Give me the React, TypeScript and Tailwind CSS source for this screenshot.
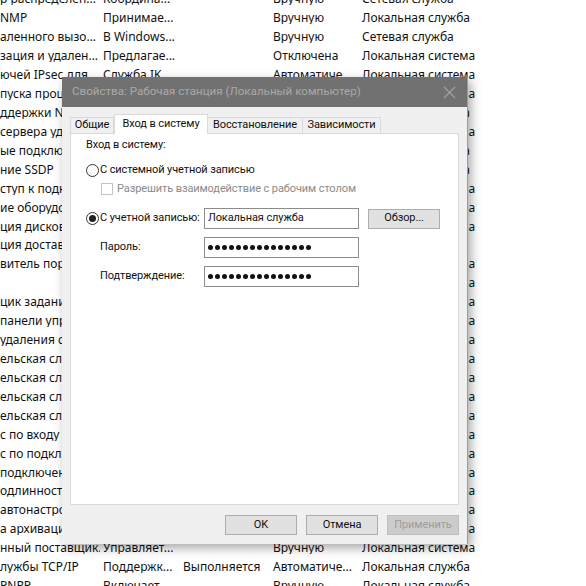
import React from "react";

type Row = [string, string, string, string, string];

const SYS = "Локальная система";
const SRV = "Локальная служба";

const rows: Row[] = [
  ["р распределен...", "Координа...", "", "Вручную", "Сетевая служба"],
  ["NMP", "Принимае...", "", "Вручную", SRV],
  ["аленного вызо...", "В Windows...", "", "Вручную", "Сетевая служба"],
  ["зация и удален...", "Предлагае...", "", "Отключена", SYS],
  ["ючей IPsec для...", "Служба IK...", "", "Автоматиче...", SYS],
  ["пуска процессов...", "Служба DCOM...", "Выполняется", "Автоматиче...", SYS],
  ["ддержки NetBIOS...", "Поддержк...", "", "Вручную", SRV],
  ["сервера удаленных...", "Позволяет...", "", "Вручную", SYS],
  ["ые подключения", "Служба...", "", "Вручную", SRV],
  ["ние SSDP", "Обнаруж...", "", "Вручную", SRV],
  ["ступ к подключению", "Обеспечи...", "", "Отключена", SYS],
  ["ие оборудования", "Обеспечи...", "", "Вручную", SYS],
  ["ция дисков", "Выполняет...", "", "Вручную", SYS],
  ["ция доставки", "Оптимиза...", "", "Вручную", "Сетевая служба"],
  ["витель портов", "Позволяет...", "", "Вручную", SYS],
  ["", "", "", "Вручную", SYS],
  ["цик заданий", "Позволяет...", "Выполняется", "Автоматиче...", SYS],
  [" панели управления", "Эта служб...", "", "Вручную", SYS],
  ["удаления смарт-карт", "Позволяет...", "", "Вручную", SYS],
  ["ельская служба", "Служба...", "", "Вручную", SYS],
  ["ельская служба", "Служба...", "", "Вручную", SYS],
  ["ельская служба", "Служба...", "", "Вручную", SYS],
  ["ельская служба", "Служба...", "", "Вручную", SYS],
  ["с по входу в систему", "Позволяет...", "", "Вручную", SYS],
  ["с по подключению", "Управляет...", "", "Вручную", SYS],
  [" подключения", "Управляет...", "", "Вручную", SYS],
  ["одлинности", "Служба...", "", "Вручную", SYS],
  [" автонастройки", "Служба...", "", "Вручную", SYS],
  ["а архивации", "Служба...", "", "Вручную", SYS],
  ["нный поставщик...", "Управляет...", "", "Вручную", SYS],
  ["лужбы TCP/IP", "Поддержк...", "Выполняется", "Автоматиче...", SRV],
  ["PNRP", "Включает...", "", "Вручную", SRV],
];

const bgFont = { fontFamily: '"Noto Sans", "Open Sans", sans-serif' };
const dlgFont = { fontFamily: 'Roboto, "Noto Sans", sans-serif' };

function Dots() {
  return (
    <span className="flex gap-[1.6px] items-center">
      {Array.from({ length: 15 }).map((_, i) => (
        <span key={i} className="block w-[5.4px] h-[5.4px] rounded-full bg-[#111]" />
      ))}
    </span>
  );
}

export default function App() {
  return (
    <div className="relative w-[586px] h-[586px] overflow-hidden bg-white text-[#111]" style={bgFont}>
      {/* background services list */}
      <div className="-mt-[10px] flex flex-col text-[12px]">
        {rows.map((r, i) => (
          <div key={i} className="flex h-[18.93px] items-center whitespace-nowrap leading-none">
            <div className="w-[100px] mr-[3px] overflow-hidden">{r[0]}</div>
            <div className="w-[80px] overflow-hidden">{r[1]}</div>
            <div className="w-[90px] overflow-hidden">{r[2]}</div>
            <div className="w-[89px] overflow-hidden">{r[3]}</div>
            <div>{r[4]}</div>
          </div>
        ))}
      </div>

      {/* dialog window */}
      <div
        className="absolute left-[62px] top-[77px] w-[406px] h-[467px] bg-[#f0f0f0] flex flex-col shadow-[3px_4px_10px_rgba(0,0,0,0.35)] border-r border-[#9a9a9a] text-[11px] tracking-[-0.1px]"
        style={dlgFont}
      >
        <div className="h-[30px] bg-[#717171] flex items-center justify-between pl-[10px] pr-[10px]">
          <span className="text-[#a9a9a9] text-[11.6px] tracking-normal">Свойства: Рабочая станция (Локальный компьютер)</span>
          <svg width="13" height="13" viewBox="0 0 13 13" className="mr-[1px]">
            <path d="M1 1 L12 12 M12 1 L1 12" stroke="#a4a4a4" strokeWidth="1.1" />
          </svg>
        </div>

        <div className="flex flex-col px-[8px] pt-[7px] flex-1">
          {/* tabs */}
          <div className="flex items-end h-[19px] relative z-10">
            <div className="h-[16px] w-[44px] border border-b-0 border-[#d9d9d9] bg-[#f0f0f0] flex items-center justify-center">Общие</div>
            <div className="h-[20px] w-[94px] -mb-[1px] border border-b-0 border-[#d9d9d9] bg-white flex items-start justify-center pt-[1px]">Вход в систему</div>
            <div className="h-[16px] w-[95px] border border-b-0 border-l-0 border-[#d9d9d9] bg-[#f0f0f0] flex items-center justify-center">Восстановление</div>
            <div className="h-[16px] w-[78px] border border-b-0 border-l-0 border-[#d9d9d9] bg-[#f0f0f0] flex items-center justify-center">Зависимости</div>
          </div>
          {/* panel */}
          <div className="h-[372px] bg-white border border-[#d9d9d9] pl-[15px] pt-[3px] flex flex-col">
            <div className="h-[16px] flex items-center">Вход в систему:</div>
            <div className="mt-[9px] h-[16px] flex items-center">
              <span className="w-[13px] h-[13px] rounded-full border border-[#333] bg-white" />
              <span className="ml-[1px]">С системной учетной записью</span>
            </div>
            <div className="mt-[3px] h-[16px] flex items-center pl-[15px]">
              <span className="w-[12px] h-[12px] border border-[#c4c4c4] bg-white" />
              <span className="ml-[4px] text-[#8a8a8a]">Разрешить взаимодействие с рабочим столом</span>
            </div>
            <div className="mt-[11px] flex items-center">
              <div className="w-[118px] flex items-center whitespace-nowrap">
                <span className="w-[13px] h-[13px] shrink-0 rounded-full border border-[#333] bg-white flex items-center justify-center">
                  <span className="w-[7px] h-[7px] rounded-full bg-[#222]" />
                </span>
                <span className="ml-[1px]">С учетной записью:</span>
              </div>
              <div className="w-[155px] h-[21px] border border-[#8c8c8c] flex items-center px-[3px]">Локальная служба</div>
              <div className="ml-[9px] w-[72px] h-[20px] bg-[#e1e1e1] border border-[#adadad] flex items-center justify-center">Обзор...</div>
            </div>
            <div className="mt-[8px] flex items-center">
              <div className="w-[118px] pl-[14px]">Пароль:</div>
              <div className="w-[155px] h-[21px] border border-[#8c8c8c] flex items-center px-[3px]"><Dots /></div>
            </div>
            <div className="mt-[8px] flex items-center">
              <div className="w-[118px] pl-[14px]">Подтверждение:</div>
              <div className="w-[155px] h-[21px] border border-[#8c8c8c] flex items-center px-[3px]"><Dots /></div>
            </div>
          </div>
          {/* buttons */}
          <div className="mt-[10px] flex justify-end gap-[9px]">
            <div className="w-[72px] h-[20px] bg-[#e1e1e1] border border-[#adadad] flex items-center justify-center">OK</div>
            <div className="w-[72px] h-[20px] bg-[#e1e1e1] border border-[#adadad] flex items-center justify-center">Отмена</div>
            <div className="w-[72px] h-[20px] bg-[#cccccc] border border-[#bfbfbf] text-[#9d9d9d] flex items-center justify-center">Применить</div>
          </div>
        </div>
      </div>
    </div>
  );
}
